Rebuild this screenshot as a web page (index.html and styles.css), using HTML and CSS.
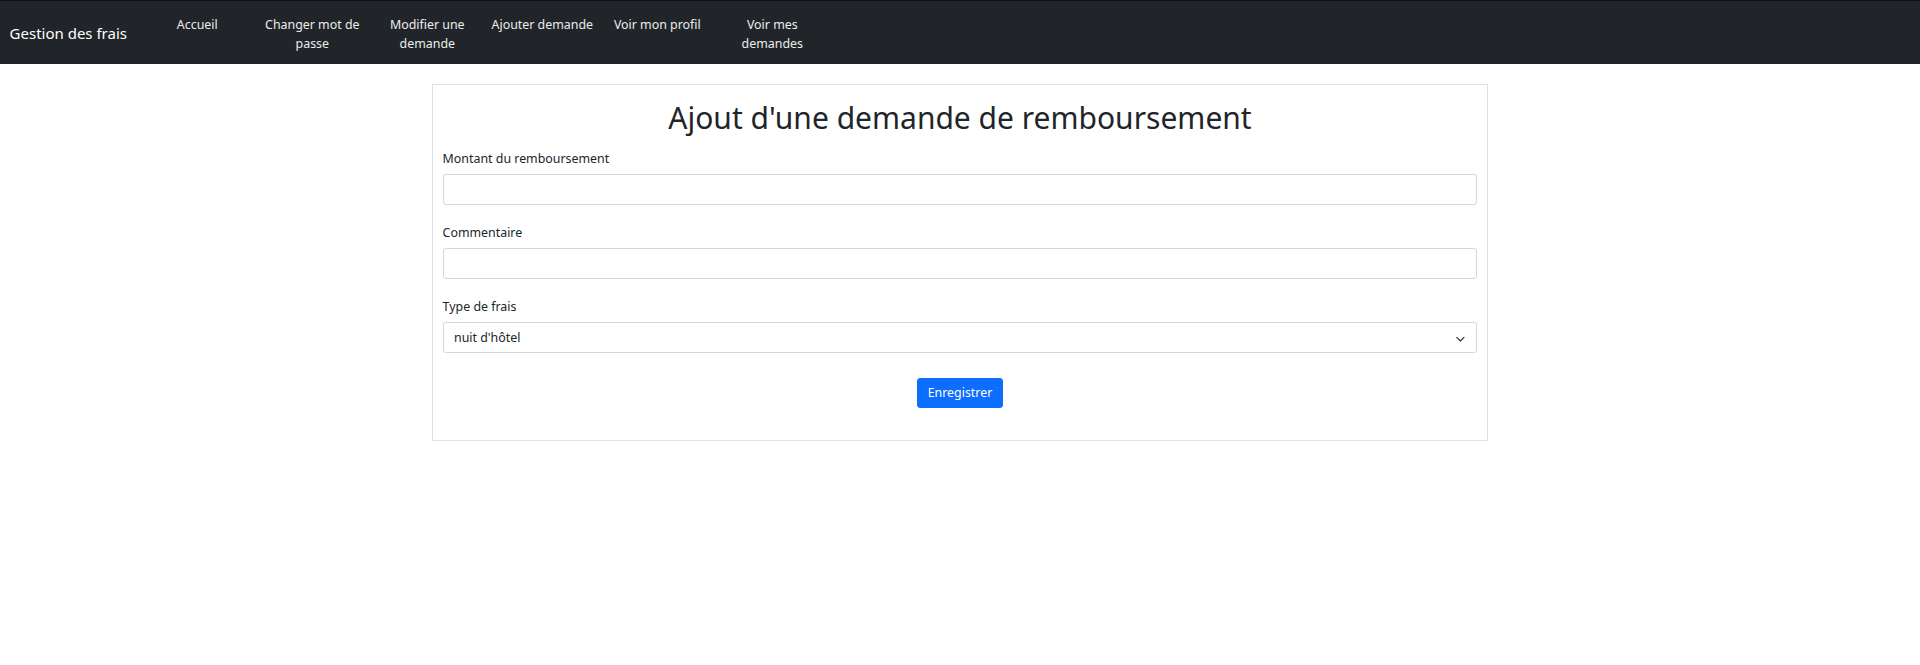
FILE: index.html
```html
<!DOCTYPE html>
<html lang="fr">
<head>
<meta charset="utf-8">
<title>Ajout d'une demande de remboursement</title>
<link rel="stylesheet" href="styles.css">
</head>
<body>
<nav class="navbar">
  <a class="brand" href="#">Gestion des frais</a>
  <ul class="nav">
    <li class="nav-item"><a class="nav-link" href="#">Accueil</a></li>
    <li class="nav-item"><a class="nav-link" href="#">Changer mot de<br>passe</a></li>
    <li class="nav-item"><a class="nav-link" href="#">Modifier une<br>demande</a></li>
    <li class="nav-item"><a class="nav-link" href="#">Ajouter demande</a></li>
    <li class="nav-item"><a class="nav-link" href="#">Voir mon profil</a></li>
    <li class="nav-item"><a class="nav-link" href="#">Voir mes<br>demandes</a></li>
  </ul>
</nav>
<main class="page">
  <section class="card">
    <h1 class="title">Ajout d'une demande de remboursement</h1>
    <form class="form">
      <div class="group">
        <label class="label" for="montant">Montant du remboursement</label>
        <input class="control" id="montant" type="text">
      </div>
      <div class="group">
        <label class="label" for="commentaire">Commentaire</label>
        <input class="control" id="commentaire" type="text">
      </div>
      <div class="group">
        <label class="label" for="type">Type de frais</label>
        <div class="select-wrap">
          <select class="control select" id="type">
            <option>nuit d'hôtel</option>
            <option>repas</option>
            <option>transport</option>
          </select>
          <svg class="chevron" width="12.8" height="9.6" viewBox="0 0 16 12" aria-hidden="true"><path fill="none" stroke="#343a40" stroke-linecap="round" stroke-linejoin="round" stroke-width="1.6" d="M3.5 5.5l4.5 4.5 4.5-4.5"/></svg>
        </div>
      </div>
      <div class="actions">
        <button class="btn" type="button">Enregistrer</button>
      </div>
    </form>
  </section>
</main>
</body>
</html>
```

FILE: styles.css
```css
* { box-sizing: border-box; }

body {
  margin: 0;
  font-family: "Noto Sans", "Open Sans", "Liberation Sans", sans-serif;
  font-size: 12.4px;
  line-height: 1.5;
  color: #212529;
  background: #fff;
}

.navbar {
  display: flex;
  align-items: center;
  background: #212529;
  border-top: 1px solid #101214;
  padding: 5.4px 9.6px 6.4px;
}

.brand {
  color: #fff;
  font-size: 15px;
  line-height: 24px;
  padding: 5.5px 0 2.5px;
  margin-right: 12.8px;
  text-decoration: none;
  white-space: nowrap;
}

.nav {
  display: flex;
  align-self: stretch;
  list-style: none;
  margin: 0;
  padding: 0;
}

.nav-item {
  flex: 0 0 115px;
}

.nav-link {
  display: block;
  padding: 8.6px 6.4px 4.2px;
  color: #ececec;
  text-align: center;
  text-decoration: none;
  font-size: 12.4px;
  line-height: 19.2px;
  white-space: nowrap;
}

.page {
  padding-top: 20px;
}

.card {
  width: 1056px;
  margin: 0 auto;
  border: 1px solid #dee2e6;
  padding: 14px 9.6px 32px;
}

.title {
  margin: 0 0 11.3px;
  font-size: 30px;
  line-height: 38.4px;
  font-weight: 400;
  text-align: center;
}

.group {
  margin-bottom: 18px;
}

.label {
  display: block;
  margin-bottom: 6.4px;
  line-height: 19.2px;
}

.control {
  display: block;
  width: 100%;
  height: 30.4px;
  padding: 4.8px 9.6px;
  font: inherit;
  font-size: 12.4px;
  line-height: 19.2px;
  color: #212529;
  background: #fff;
  border: 1px solid #d3d7db;
  border-radius: 3px;
  outline: none;
}

.select-wrap {
  position: relative;
}

.select {
  appearance: none;
  -webkit-appearance: none;
  padding-left: 10.4px;
  padding-right: 28.8px;
}

.chevron {
  position: absolute;
  right: 10.6px;
  top: 10.4px;
  pointer-events: none;
}

.actions {
  display: flex;
  justify-content: center;
  padding-top: 7.6px;
}

.btn {
  font: inherit;
  font-size: 12.4px;
  line-height: 19.2px;
  padding: 4.2px 9.8px;
  color: #fff;
  background: #0d6efd;
  border: 1px solid #0d6efd;
  border-radius: 3px;
  cursor: pointer;
}
```
